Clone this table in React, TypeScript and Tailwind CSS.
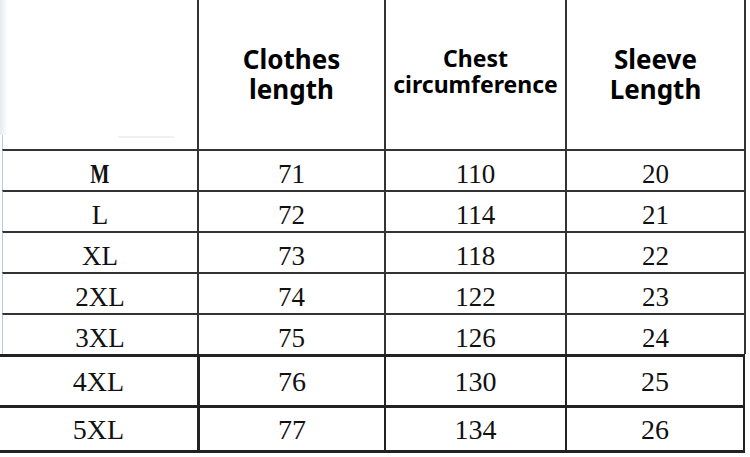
import React from 'react';

const topRows = [
  ['M', '71', '110', '20'],
  ['L', '72', '114', '21'],
  ['XL', '73', '118', '22'],
  ['2XL', '74', '122', '23'],
  ['3XL', '75', '126', '24'],
];

const bottomRows = [
  { cells: ['4XL', '76', '130', '25'], h: 'h-[51px]' },
  { cells: ['5XL', '77', '134', '26'], h: 'h-[45px]' },
];

const serif = { fontFamily: '"Liberation Serif", "Times New Roman", serif' };
const sans = { fontFamily: '"Noto Sans", "Open Sans", sans-serif' };

const App: React.FC = () => {
  return (
    <div className="w-[750px] h-[457px] bg-white overflow-hidden text-[#111]">
      {/* header */}
      <div className="grid grid-cols-[197px_187px_181px_181px] h-[149px] font-bold text-black" style={sans}>
        <div className="relative">
          <div className="absolute left-0 top-0 w-[8px] h-[135px] bg-gradient-to-r from-[#e6eaef] to-white" />
          <div className="absolute left-[2px] top-[135px] w-[1px] h-[14px] bg-[#b9c9dc]" />
          <div className="absolute left-[118px] top-[136px] w-[56px] h-[2px] bg-[#f0f0f0]" />
        </div>
        <div className="border-l-2 border-[#333] flex items-center justify-center pb-[1px]">
          <div className="text-center text-[26px] leading-[30px]">
            <div>Clothes</div>
            <div>length</div>
          </div>
        </div>
        <div className="border-l-2 border-[#333] flex items-center justify-center pb-[8px]">
          <div className="text-center text-[23px] leading-[26px]">
            <div>Chest</div>
            <div>circumference</div>
          </div>
        </div>
        <div className="border-l-2 border-r-2 border-[#333] flex items-center justify-center pb-[1px]">
          <div className="text-center text-[26px] leading-[30px]">
            <div>Sleeve</div>
            <div>Length</div>
          </div>
        </div>
      </div>

      {/* rows M .. 3XL */}
      <div className="pl-[2px] w-[748px]" style={serif}>
        {topRows.map((row, i) => (
          <div key={i} className="grid grid-cols-[195px_187px_181px_181px] h-[41px] text-[27px] leading-none">
            <div className="border-t-2 border-l border-t-[#333] border-l-[#b9c9dc] flex items-center justify-center pt-[7px]">
              <span className={i === 0 ? 'font-bold scale-x-75' : ''}>{row[0]}</span>
            </div>
            <div className="border-t-2 border-l-2 border-[#333] flex items-center justify-center pt-[7px]">{row[1]}</div>
            <div className="border-t-2 border-l-2 border-[#333] flex items-center justify-center pt-[7px]">{row[2]}</div>
            <div className="border-t-2 border-l-2 border-r-2 border-[#333] flex items-center justify-center pt-[7px]">{row[3]}</div>
          </div>
        ))}
      </div>

      {/* rows 4XL, 5XL */}
      <div className="w-[745px]" style={serif}>
        {bottomRows.map((row, i) => (
          <div
            key={i}
            className={`grid grid-cols-[197px_187px_181px_180px] ${row.h} text-[28px] leading-none border-t-[3px] border-[#222]`}
          >
            <div className="flex items-center justify-center pt-[2px]">{row.cells[0]}</div>
            <div className="border-l-[3px] border-[#222] flex items-center justify-center pt-[2px]">{row.cells[1]}</div>
            <div className="border-l-2 border-[#222] flex items-center justify-center pt-[2px]">{row.cells[2]}</div>
            <div className="border-l-2 border-r-2 border-[#222] flex items-center justify-center pt-[2px]">{row.cells[3]}</div>
          </div>
        ))}
        <div className="h-[3px] bg-[#222]" />
      </div>
    </div>
  );
};

export default App;
